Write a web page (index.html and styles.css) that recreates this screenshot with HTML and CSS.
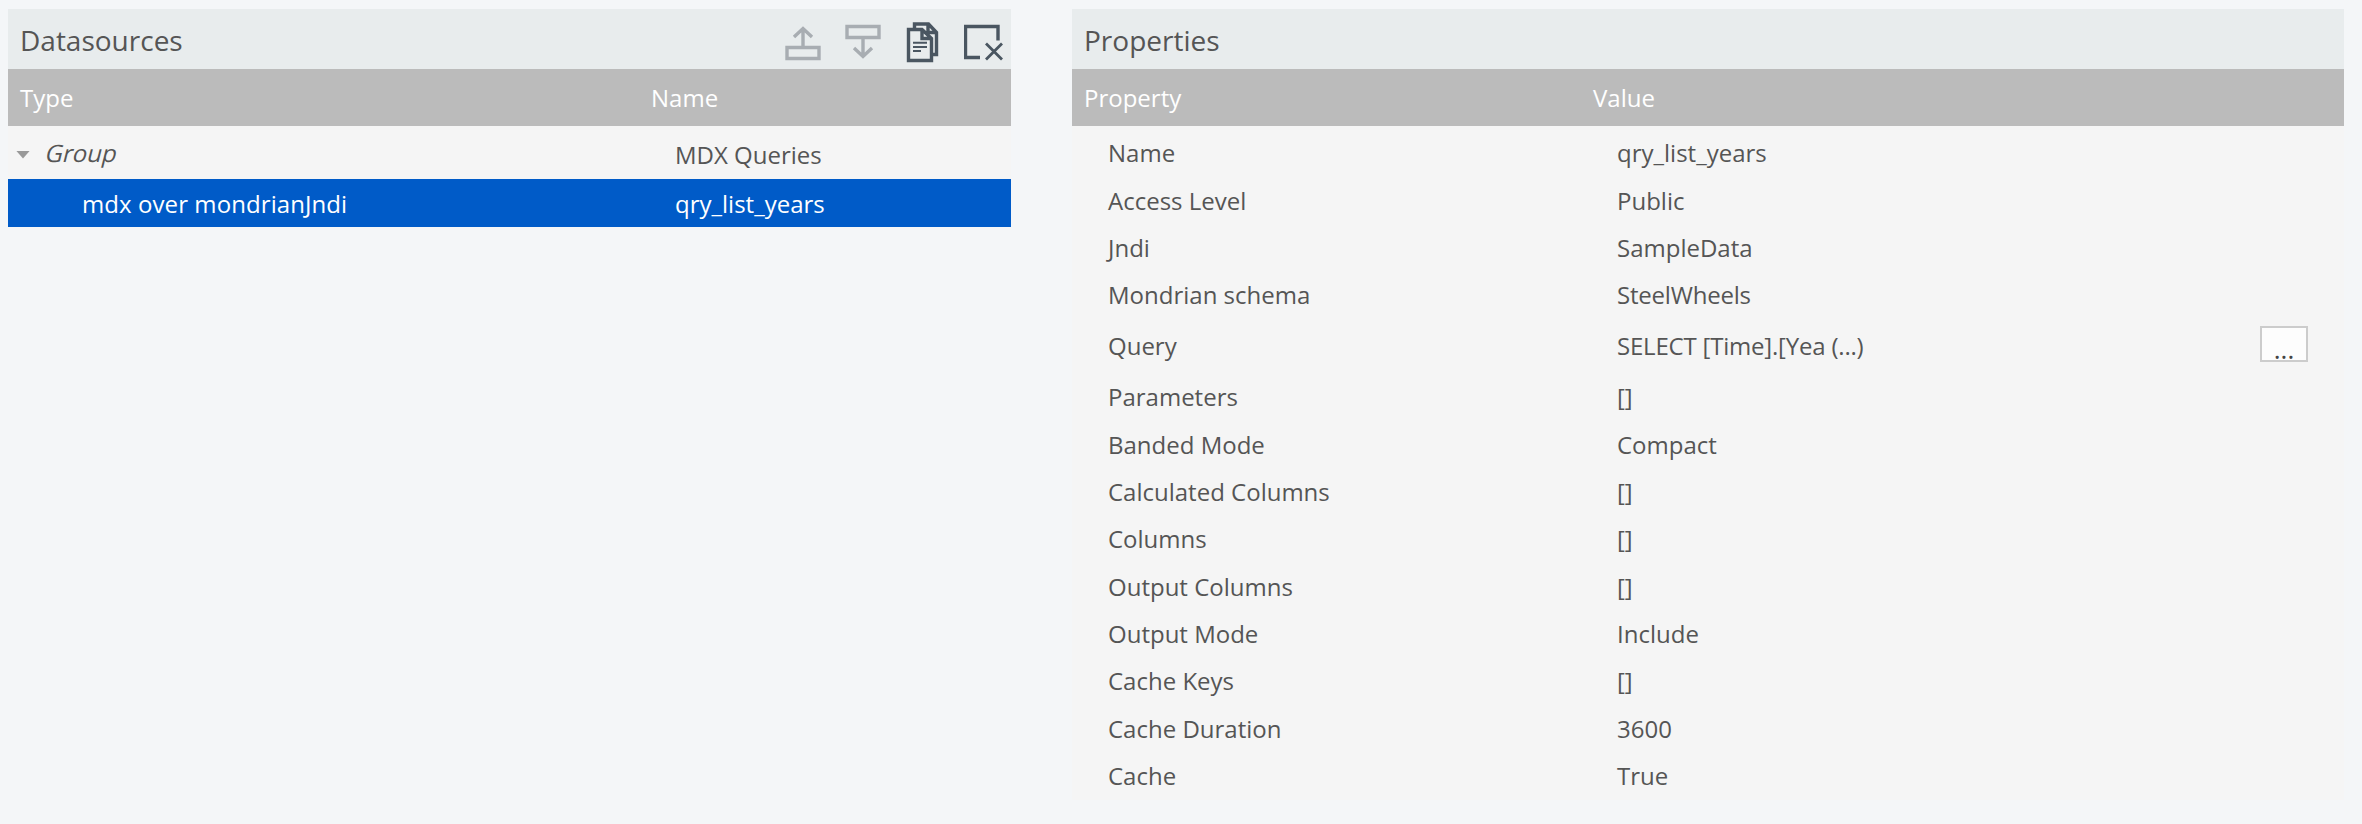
FILE: index.html
```html
<!DOCTYPE html>
<html lang="en">
<head>
<meta charset="utf-8">
<title>Datasources</title>
<link rel="stylesheet" href="styles.css">
</head>
<body>
<main class="workspace">
  <section class="panel datasources">
    <header class="panel-header">
      <h2 class="panel-title">Datasources</h2>
      <div class="toolbar">
        <svg class="icon disabled" viewBox="0 0 40 44"><path d="M3 28.500h32v11H3zM19 28V9M10 18l9-8.500 9 8.500"/></svg>
        <svg class="icon disabled" viewBox="0 0 40 44"><path d="M3 7.500h32v11H3zM19 19v18M10 29l9 8.500 9-8.500"/></svg>
        <svg class="icon" viewBox="0 0 40 44"><path d="M4.500 10.500H18l9.500 9v22h-23zM18 11v8.500h9.500M10.500 10V5h14l8 8.500v22H28.500M24 5v8.500h8.500"/><path class="lines" d="M9 23.700h14M9 28h14M9 32h8"/></svg>
        <svg class="icon" viewBox="0 0 40 44"><path d="M34 21.500V7.500H1.500v31H16"/><path class="cross" d="M22 24.500l16 16M38 24.500l-16 16"/></svg>
      </div>
    </header>
    <div class="columns"><span>Type</span><span>Name</span></div>
    <div class="row group"><span class="type"><i class="caret"></i><em>Group</em></span><span class="name">MDX Queries</span></div>
    <div class="row selected"><span class="type">mdx over mondrianJndi</span><span class="name">qry_list_years</span></div>
  </section>
  <section class="panel properties">
    <header class="panel-header"><h2 class="panel-title">Properties</h2></header>
    <div class="columns"><span>Property</span><span>Value</span></div>
    <div class="list">
      <div class="property"><span>Name</span><span>qry_list_years</span></div>
      <div class="property"><span>Access Level</span><span>Public</span></div>
      <div class="property"><span>Jndi</span><span>SampleData</span></div>
      <div class="property"><span>Mondrian schema</span><span class="tight">SteelWheels</span></div>
      <div class="property query"><span>Query</span><span class="tight">SELECT [Time].[Yea (...)</span><button class="more">...</button></div>
      <div class="property"><span>Parameters</span><span>[]</span></div>
      <div class="property"><span>Banded Mode</span><span>Compact</span></div>
      <div class="property"><span>Calculated Columns</span><span>[]</span></div>
      <div class="property"><span>Columns</span><span>[]</span></div>
      <div class="property"><span>Output Columns</span><span>[]</span></div>
      <div class="property"><span>Output Mode</span><span>Include</span></div>
      <div class="property"><span>Cache Keys</span><span>[]</span></div>
      <div class="property"><span>Cache Duration</span><span>3600</span></div>
      <div class="property"><span>Cache</span><span>True</span></div>
    </div>
  </section>
</main>
</body>
</html>
```
FILE: styles.css
```css
* { box-sizing: border-box; }
body {
  margin: 0;
  background: #f4f6f8;
  color: #555;
  font: 24px/32px "Open Sans", sans-serif;
}
.workspace {
  display: grid;
  grid-template-columns: 1003px 1272px;
  column-gap: 61px;
  align-items: start;
  padding: 9px 18px 0 8px;
}
.panel-header {
  display: flex;
  justify-content: space-between;
  height: 60px;
  padding: 12px 7px 0 12px;
  background: #e8eced;
}
.panel-title { margin: 0; font-size: 28px; line-height: 38px; font-weight: 400; }
.toolbar { display: flex; gap: 20px; margin-top: -2px; }
.icon { width: 40px; height: 44px; fill: none; stroke: #4a5661; stroke-width: 3.4; }
.icon.disabled { stroke: #a8adb2; }
.icon .lines { stroke-width: 2; }
.icon .cross { stroke-width: 2.8; }
.columns {
  display: grid;
  height: 57px;
  padding: 13px 0 0 12px;
  background: #bbb;
  color: #fff;
}
.datasources .columns { grid-template-columns: 631px 1fr; }
.properties .columns { grid-template-columns: 509px 1fr; }
.row { display: grid; grid-template-columns: 667px 1fr; }
.group { height: 53px; padding-top: 11px; background: #f5f5f5; }
.group .type { display: flex; align-items: center; height: 32px; padding-left: 8px; }
.group em {
  font-style: normal;
  transform: skewX(-14deg);
  transform-origin: 0 25px;
}
.group .name { padding-top: 2px; }
.caret {
  width: 14px;
  height: 8px;
  margin: 3px 14px 0 0;
  background: #999;
  clip-path: polygon(0 0, 100% 0, 50% 100%);
}
.selected { height: 48px; padding-top: 9px; background: #005bc8; color: #fff; }
.selected .type { padding-left: 74px; letter-spacing: 0.08px; }
.list { padding-top: 3.500px; background: #f5f5f5; }
.property {
  display: grid;
  grid-template-columns: 509px 1fr auto;
  align-items: center;
  height: 47.400px;
  padding: 0 36px 0 36px;
}
.query { height: 54.400px; }
.tight { letter-spacing: -0.2px; }
.more {
  width: 48px;
  height: 36px;
  margin-bottom: 4px;
  padding: 10px 0 0;
  border: 2px solid #ccc;
  background: #fdfdfd;
  color: #444;
  font: 26px/22px "Open Sans", sans-serif;
}
```
